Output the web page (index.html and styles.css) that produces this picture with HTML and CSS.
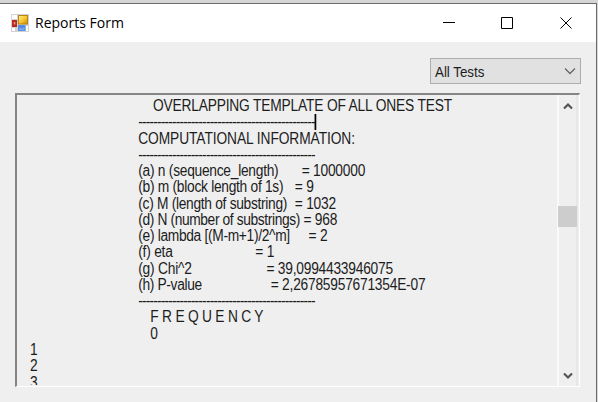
FILE: index.html
```html
<!DOCTYPE html>
<html lang="en">
<head>
<meta charset="utf-8">
<title>Reports Form</title>
<link rel="stylesheet" href="styles.css">
</head>
<body>
<div class="window">
  <header class="titlebar">
    <svg class="app-icon" width="18" height="18" viewBox="0 0 18 18">
      <defs>
        <linearGradient id="gold" x2="1" y2="1"><stop stop-color="#fff09a"/><stop offset=".5" stop-color="#f6c832"/><stop offset="1" stop-color="#c98b08"/></linearGradient>
        <linearGradient id="blue" x2="0" y2="1"><stop stop-color="#3c78dc"/><stop offset="1" stop-color="#8fbcf8"/></linearGradient>
      </defs>
      <rect width="18" height="18" fill="#d3d3d3"/>
      <path d="M1 1h5v4H1zM1 14h3v3H1zM15 12h2v5h-2z" fill="#fff"/>
      <rect x="7.5" y="1.5" width="9" height="8.5" fill="url(#gold)" stroke="#b88412"/>
      <rect x="1" y="6" width="5" height="7" fill="#b92a1c"/>
      <rect x="2.8" y="8" width="1.5" height="2.5" fill="#ee9585"/>
      <rect x="7.5" y="11.5" width="6.5" height="5" fill="url(#blue)" stroke="#5d8fe0"/>
    </svg>
    <h1 class="title">Reports Form</h1>
    <svg class="controls" width="132" height="14" viewBox="0 0 132 14" fill="none" stroke="#000">
      <path d="M0 6.5h12M58.500 1.500h11v11h-11zM117.500 1.500l11 11M128.500 1.500l-11 11"/>
    </svg>
  </header>
  <main class="client">
    <div class="combo">
      <span class="combo-label">All Tests</span>
      <svg width="12" height="8" viewBox="0 0 12 8" fill="none" stroke="#666" stroke-width="1.3"><path d="M1 1.500l5 5 5-5"/></svg>
    </div>
    <div class="report">
      <div class="text">
        <p class="heading"><span>OVERLAPPING TEMPLATE OF ALL ONES TEST</span></p>
        <p class="rule"><span>-----------------------------------------------</span><i class="caret"></i></p>
        <p class="info"><span>COMPUTATIONAL INFORMATION:</span></p>
        <p class="rule"><span>-----------------------------------------------</span></p>
        <p class="row a"><span>(a) n (sequence_length)</span><b>= 1000000</b></p>
        <p class="row b"><span>(b) m (block length of 1s)</span><b>= 9</b></p>
        <p class="row c"><span>(c) M (length of substring)</span><b>= 1032</b></p>
        <p class="row d"><span>(d) N (number of substrings)</span><b>= 968</b></p>
        <p class="row e"><span>(e) lambda [(M-m+1)/2^m]</span><b>= 2</b></p>
        <p class="row f"><span>(f) eta</span><b>= 1</b></p>
        <p class="row g"><span>(g) Chi^2</span><b>= 39,0994433946075</b></p>
        <p class="row h"><span>(h) P-value</span><b>= 2,26785957671354E-07</b></p>
        <p class="rule"><span>-----------------------------------------------</span></p>
        <p class="freq"><span>F R E Q U E N C Y</span></p>
        <p class="zero">0</p>
        <p class="index">1</p>
        <p class="index">2</p>
        <p class="index">3</p>
      </div>
      <div class="scrollbar">
        <svg width="10" height="8" viewBox="0 0 10 8" fill="none" stroke="#555" stroke-width="2.200"><path d="M1 6.500l4-4 4 4"/></svg>
        <div class="thumb"></div>
        <svg width="10" height="8" viewBox="0 0 10 8" fill="none" stroke="#555" stroke-width="2.200"><path d="M1 1.500l4 4 4-4"/></svg>
      </div>
    </div>
  </main>
</div>
</body>
</html>
```
FILE: styles.css
```css
* { box-sizing: border-box; }
body { margin: 0; width: 598px; height: 402px; overflow: hidden; background: #d6d6d6; font-family: "Liberation Sans", Arial, sans-serif; }
.window { margin-top: 3px; width: 597px; height: 399px; border-top: 1px solid #6b6b6b; border-right: 1px solid #6b6b6b; background: #efefef; }
.titlebar { height: 38px; background: #fff; display: flex; align-items: center; padding-left: 11px; }
.app-icon { display: block; }
.title { margin: -3px 0 0 6px; font: 400 15px "Open Sans", sans-serif; color: #000; transform: scaleX(.935); transform-origin: left; width: 120px; white-space: nowrap; }
.controls { margin-left: auto; margin-right: 21px; display: block; }
.client { padding: 16px 15px 0 15px; display: flex; flex-direction: column; }
.combo { align-self: flex-end; width: 151px; height: 26px; border: 1px solid #adadad; background: #e1e1e1; display: flex; align-items: center; justify-content: space-between; padding: 0 4px 0 4px; }
.combo-label { margin-top: 2px; font-size: 15.500px; color: #1c1c1c; transform: scaleX(.86); transform-origin: left; }
.report { margin-top: 9px; width: 565px; height: 294px; border: 1px solid #fff; border-top: 2px solid #858585; border-left: 2px solid #858585; display: flex; overflow: hidden; }
.text { flex: 0 0 627px; margin-right: -87px; height: 290px; overflow: hidden; transform: scaleX(.86); transform-origin: left; font-size: 16px; letter-spacing: -.26px; line-height: 16.280px; color: #1c1c1c; padding-top: 3px; }
.text p { margin: 0 0 0 141px; height: 16.280px; white-space: pre; display: flex; }
.text b { font-weight: 400; }
.text .heading { margin-left: 158px; letter-spacing: -.2px; }
.text .info { letter-spacing: -.1px; }
.text .rule { letter-spacing: -.96px; }
.text .freq, .text .zero { margin-left: 155px; }
.text .freq { letter-spacing: -.26px; }
.text .index { margin-left: 15px; }
.caret { width: 1.400px; height: 16px; background: #000; }
.row span { flex: none; }
.a span { width: 190px; letter-spacing: -.3px; }
.b span { width: 182px; letter-spacing: -.32px; }
.c span { width: 182px; letter-spacing: -.34px; }
.d span { width: 192px; letter-spacing: -.43px; }
.e span { width: 198px; letter-spacing: -.36px; }
.f span { width: 136px; }
.g span { width: 149px; }
.h span { width: 154px; letter-spacing: -.4px; }
.scrollbar { width: 21px; flex: none; border-left: 2px solid #fafafa; border-right: 2px solid #e7e7e7; display: flex; flex-direction: column; align-items: center; padding-top: 7px; }
.thumb { width: 19px; height: 21px; background: #cdcdcd; margin: 96px 0 145px; }
```
